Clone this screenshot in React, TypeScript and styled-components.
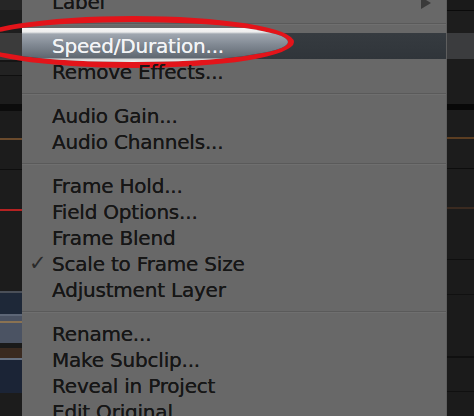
import React from 'react'
import styled, { createGlobalStyle } from 'styled-components'

type Band = { h: number; bg: string }

const leftTracks: Band[] = [
  { h: 10, bg: '#262626' },
  { h: 23, bg: '#1e1e1e' },
  { h: 27, bg: '#3b3b3b' },
  { h: 2, bg: '#151515' },
  { h: 13, bg: '#222222' },
  { h: 1, bg: '#0f0f0f' },
  { h: 28, bg: '#1d1d1d' },
  { h: 7, bg: '#0c0c0c' },
  { h: 27, bg: '#1c1c1c' },
  { h: 2, bg: '#6a4a2c' },
  { h: 29, bg: '#1c1c1c' },
  { h: 1, bg: '#0e0e0e' },
  { h: 39, bg: '#1c1c1c' },
  { h: 2, bg: '#b52222' },
  { h: 80, bg: '#1c1c1c' },
  { h: 2, bg: '#4a4f58' },
  { h: 21, bg: '#1e2838' },
  { h: 2, bg: '#5d6676' },
  { h: 5, bg: '#4a5262' },
  { h: 2, bg: '#8a7252' },
  { h: 20, bg: '#4b5363' },
  { h: 5, bg: '#1a1a1a' },
  { h: 10, bg: '#3a2a20' },
  { h: 2, bg: '#667080' },
  { h: 33, bg: '#1b2436' },
  { h: 30, bg: '#1c1c1c' },
]

const rightTracks: Band[] = [
  { h: 10, bg: '#1a1a1a' },
  { h: 1, bg: '#0a0a0a' },
  { h: 22, bg: '#1d1d1d' },
  { h: 26, bg: '#3b3c3e' },
  { h: 45, bg: '#1c1c1c' },
  { h: 6, bg: '#080808' },
  { h: 27, bg: '#1c1c1c' },
  { h: 2, bg: '#5c3e22' },
  { h: 29, bg: '#1c1c1c' },
  { h: 1, bg: '#0d0d0d' },
  { h: 38, bg: '#1c1c1c' },
  { h: 2, bg: '#3a2a20' },
  { h: 50, bg: '#1b1b1b' },
  { h: 1, bg: '#0f0f0f' },
  { h: 34, bg: '#1b1b1b' },
  { h: 1, bg: '#111111' },
  { h: 61, bg: '#1b1b1b' },
  { h: 2, bg: '#101010' },
  { h: 33, bg: '#1b1b1b' },
  { h: 1, bg: '#101010' },
  { h: 30, bg: '#1b1b1b' },
]

type Entry = { label?: string; sep?: boolean; active?: boolean; checked?: boolean; sub?: boolean }

const entries: Entry[] = [
  { label: 'Label', sub: true },
  { sep: true },
  { label: 'Speed/Duration...', active: true },
  { label: 'Remove Effects...' },
  { sep: true },
  { label: 'Audio Gain...' },
  { label: 'Audio Channels...' },
  { sep: true },
  { label: 'Frame Hold...' },
  { label: 'Field Options...' },
  { label: 'Frame Blend' },
  { label: 'Scale to Frame Size', checked: true },
  { label: 'Adjustment Layer' },
  { sep: true },
  { label: 'Rename...' },
  { label: 'Make Subclip...' },
  { label: 'Reveal in Project' },
  { label: 'Edit Original' },
]

const App = () => {
  return (
    <>
      <GlobalStyle />
      <Screen>
        <Strip $w={22}>
          {leftTracks.map((b, i) => (
            <Track key={i} $h={b.h} $bg={b.bg} />
          ))}
        </Strip>
        <Menu>
          {entries.map((e, i) =>
            e.sep ? (
              <Separator key={i}>
                <Rule />
              </Separator>
            ) : (
              <Item key={i} $active={e.active}>
                {e.checked && <Check>✓</Check>}
                <Text $active={e.active}>{e.label}</Text>
                {e.sub && <Arrow />}
              </Item>
            )
          )}
        </Menu>
        <Strip $w={27}>
          {rightTracks.map((b, i) => (
            <Track key={i} $h={b.h} $bg={b.bg} />
          ))}
        </Strip>
        <Ellipse>
          <Sheen />
        </Ellipse>
      </Screen>
    </>
  )
}

export default App

const GlobalStyle = createGlobalStyle`
    html, body {
        margin: 0;
        padding: 0;
        background: #1c1c1c;
        overflow: hidden;
    }
`
const Screen = styled.div`
    position: relative;
    width: 474px;
    height: 416px;
    display: flex;
    overflow: hidden;
    font-family: "DejaVu Sans", "Liberation Sans", sans-serif;
`
const Strip = styled.div<{ $w: number }>`
    width: ${(p) => p.$w}px;
    flex-shrink: 0;
    display: flex;
    flex-direction: column;
    background: #1c1c1c;
`
const Track = styled.div<{ $h: number; $bg: string }>`
    height: ${(p) => p.$h}px;
    flex-shrink: 0;
    background: ${(p) => p.$bg};
`
const Menu = styled.div`
    flex: 1;
    margin-top: -11px;
    display: flex;
    flex-direction: column;
    background: #686868;
    border-right: 1px solid #5e5e5e;
`
const Item = styled.div<{ $active?: boolean }>`
    position: relative;
    height: 26px;
    flex-shrink: 0;
    display: flex;
    align-items: center;
    padding-left: 30px;
    background: ${(p) => (p.$active ? 'linear-gradient(#363b40, #30353a)' : 'transparent')};
`
const Text = styled.span<{ $active?: boolean }>`
    position: relative;
    z-index: 3;
    font-size: 20px;
    letter-spacing: -0.2px;
    color: ${(p) => (p.$active ? '#f3f4f6' : '#161616')};
    text-shadow: 0 0 0.4px ${(p) => (p.$active ? '#f3f4f6' : '#161616')};
    white-space: nowrap;
`
const Check = styled.span`
    position: absolute;
    left: 7px;
    top: 0px;
    font-size: 21px;
    color: #2a2a2a;
`
const Arrow = styled.span`
    position: absolute;
    right: 15px;
    top: 8px;
    width: 0;
    height: 0;
    border-top: 6px solid transparent;
    border-bottom: 6px solid transparent;
    border-left: 10px solid #3a3a3a;
`
const Separator = styled.div`
    height: 18px;
    flex-shrink: 0;
    display: flex;
    align-items: center;
`
const Rule = styled.div`
    width: 100%;
    height: 1px;
    background: #5a5a5a;
    border-bottom: 1px solid #6f6f6f;
`
const Ellipse = styled.div`
    position: absolute;
    left: -28px;
    top: 16px;
    width: 322px;
    height: 52px;
    box-sizing: border-box;
    border: 6px solid #e3141a;
    border-radius: 50%;
    overflow: hidden;
    z-index: 2;
    pointer-events: none;
`
const Sheen = styled.div`
    margin-top: 6px;
    margin-left: 44px;
    height: 35px;
    background: linear-gradient(
        to bottom,
        #f5f5f5 0px,
        #eeeeee 4px,
        #a0a7b0 6px,
        #838b95 16px,
        #5f6770 30px,
        #d8d8d8 31px,
        #fafafa 35px
    );
`
